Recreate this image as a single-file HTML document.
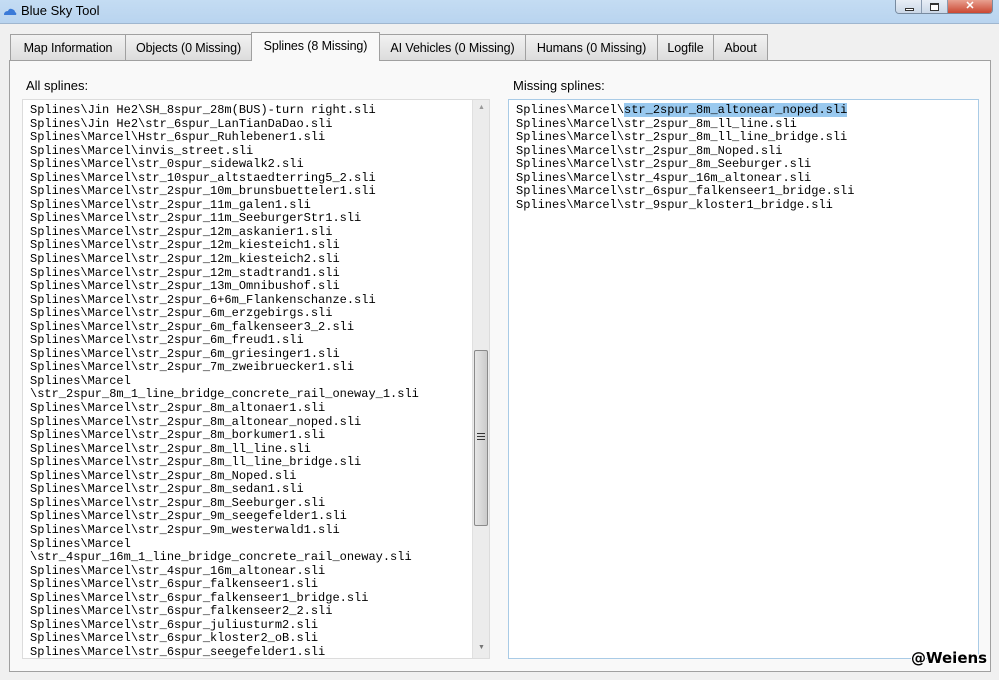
<!DOCTYPE html>
<html><head><meta charset="utf-8"><style>
*{margin:0;padding:0;box-sizing:border-box}
body{width:999px;height:680px;background:#f0f0f0;font-family:"Liberation Sans",sans-serif;position:relative;overflow:hidden}
.title{position:absolute;left:0;top:0;width:999px;height:24px;background:linear-gradient(#c4dcf3,#b9d4ef);border-bottom:1px solid #9fb6cf}
.title span{position:absolute;left:21px;top:3px;font-size:13px;color:#000}
.btns{position:absolute;right:6px;top:0;height:14px;width:98px;border:1px solid #788ba0;border-top:none;border-radius:0 0 4px 4px;overflow:hidden;display:flex}
.btns div{height:14px;background:linear-gradient(#e8eef6,#c8d6e6);border-right:1px solid #8a9bb0;position:relative}
.close{background:linear-gradient(#e8a090,#c8402a)!important;border:none!important;color:#fff;font-size:11px;text-align:center;line-height:13px;font-weight:bold}
.tab{position:absolute;top:34px;height:27px;border:1px solid #a0a0a0;background:linear-gradient(#f2f2f2,#dcdcdc);font-size:12.5px;padding:6px 0 0 0;text-align:center;color:#000;white-space:nowrap;letter-spacing:-0.1px}
.tab.act{top:32px;height:29px;background:#f9f9f9;border-bottom:none;padding-top:6px;z-index:2}
.panel{position:absolute;left:9px;top:60px;width:982px;height:612px;background:#f9f9f9;border:1px solid #a0a0a0}
.lbl{position:absolute;font-size:13px;top:78px}
.list{position:absolute;top:99px;height:560px;background:#fff;font-family:"Liberation Mono",monospace;font-size:12px;line-height:13.55px;padding:4px 0 0 7px;white-space:pre;overflow:hidden;color:#000}
.sel{background:#99c9ef}
</style></head><body>
<div class="title"><svg style="position:absolute;left:3px;top:7px" width="14" height="9"><path d="M1 8 Q1 4 5 4 Q6 1 9 2 Q12 3 12 5 Q14 6 13 8Z" fill="#3a7ad8"/></svg><span>Blue Sky Tool</span>
<div class="btns"><div style="width:27px"><div style="position:absolute;left:9px;top:8px;width:9px;height:3px;border:1px solid #333;background:#fff"></div></div><div style="width:26px"><div style="position:absolute;left:8px;top:3px;width:9px;height:8px;border:1px solid #333;border-top-width:2px;background:#fff"></div></div><div class="close" style="width:45px">✕</div></div></div>
<div class="tab" style="left:10px;width:116px">Map Information</div>
<div class="tab" style="left:125px;width:127px">Objects (0 Missing)</div>
<div class="tab act" style="left:251px;width:129px">Splines (8 Missing)</div>
<div class="tab" style="left:379px;width:147px">AI Vehicles (0 Missing)</div>
<div class="tab" style="left:525px;width:133px">Humans (0 Missing)</div>
<div class="tab" style="left:657px;width:57px">Logfile</div>
<div class="tab" style="left:713px;width:55px">About</div>
<div class="panel"></div>
<div class="lbl" style="left:26px">All splines:</div>
<div class="lbl" style="left:513px">Missing splines:</div>
<div class="list" style="left:22px;width:468px;border:1px solid #dcdcdc;padding-top:4px">Splines\Jin He2\SH_8spur_28m(BUS)-turn right.sli
Splines\Jin He2\str_6spur_LanTianDaDao.sli
Splines\Marcel\Hstr_6spur_Ruhlebener1.sli
Splines\Marcel\invis_street.sli
Splines\Marcel\str_0spur_sidewalk2.sli
Splines\Marcel\str_10spur_altstaedterring5_2.sli
Splines\Marcel\str_2spur_10m_brunsbuetteler1.sli
Splines\Marcel\str_2spur_11m_galen1.sli
Splines\Marcel\str_2spur_11m_SeeburgerStr1.sli
Splines\Marcel\str_2spur_12m_askanier1.sli
Splines\Marcel\str_2spur_12m_kiesteich1.sli
Splines\Marcel\str_2spur_12m_kiesteich2.sli
Splines\Marcel\str_2spur_12m_stadtrand1.sli
Splines\Marcel\str_2spur_13m_Omnibushof.sli
Splines\Marcel\str_2spur_6+6m_Flankenschanze.sli
Splines\Marcel\str_2spur_6m_erzgebirgs.sli
Splines\Marcel\str_2spur_6m_falkenseer3_2.sli
Splines\Marcel\str_2spur_6m_freud1.sli
Splines\Marcel\str_2spur_6m_griesinger1.sli
Splines\Marcel\str_2spur_7m_zweibruecker1.sli
Splines\Marcel
\str_2spur_8m_1_line_bridge_concrete_rail_oneway_1.sli
Splines\Marcel\str_2spur_8m_altonaer1.sli
Splines\Marcel\str_2spur_8m_altonear_noped.sli
Splines\Marcel\str_2spur_8m_borkumer1.sli
Splines\Marcel\str_2spur_8m_ll_line.sli
Splines\Marcel\str_2spur_8m_ll_line_bridge.sli
Splines\Marcel\str_2spur_8m_Noped.sli
Splines\Marcel\str_2spur_8m_sedan1.sli
Splines\Marcel\str_2spur_8m_Seeburger.sli
Splines\Marcel\str_2spur_9m_seegefelder1.sli
Splines\Marcel\str_2spur_9m_westerwald1.sli
Splines\Marcel
\str_4spur_16m_1_line_bridge_concrete_rail_oneway.sli
Splines\Marcel\str_4spur_16m_altonear.sli
Splines\Marcel\str_6spur_falkenseer1.sli
Splines\Marcel\str_6spur_falkenseer1_bridge.sli
Splines\Marcel\str_6spur_falkenseer2_2.sli
Splines\Marcel\str_6spur_juliusturm2.sli
Splines\Marcel\str_6spur_kloster2_oB.sli
Splines\Marcel\str_6spur_seegefelder1.sli</div>
<div style="position:absolute;left:472px;top:100px;width:17px;height:558px;background:#ececec;border-left:1px solid #e0e0e0"></div>
<div style="position:absolute;left:474px;top:350px;width:14px;height:176px;border:1px solid #8a8a8a;border-radius:2px;background:linear-gradient(90deg,#e6e6e6,#cbcbcb)"></div>
<div style="position:absolute;left:477px;top:433px;width:8px;height:7px;border-top:1px solid #333;border-bottom:1px solid #333"><div style="margin-top:2px;border-top:1px solid #333"></div></div>
<div style="position:absolute;left:478px;top:104px;font-size:7px;color:#999">▲</div>
<div style="position:absolute;left:478px;top:644px;font-size:7px;color:#777">▼</div>
<div class="list" style="left:508px;width:471px;border:1px solid #a9cbe6">Splines\Marcel\<span class="sel">str_2spur_8m_altonear_noped.sli</span>
Splines\Marcel\str_2spur_8m_ll_line.sli
Splines\Marcel\str_2spur_8m_ll_line_bridge.sli
Splines\Marcel\str_2spur_8m_Noped.sli
Splines\Marcel\str_2spur_8m_Seeburger.sli
Splines\Marcel\str_4spur_16m_altonear.sli
Splines\Marcel\str_6spur_falkenseer1_bridge.sli
Splines\Marcel\str_9spur_kloster1_bridge.sli</div>
<div style="position:absolute;left:911px;top:649px;font-family:'DejaVu Sans',sans-serif;font-weight:bold;font-size:15px;color:#000;text-shadow:1px 1px 0 #fff,-1px -1px 0 #fff">@Weiens</div>
</body></html>
